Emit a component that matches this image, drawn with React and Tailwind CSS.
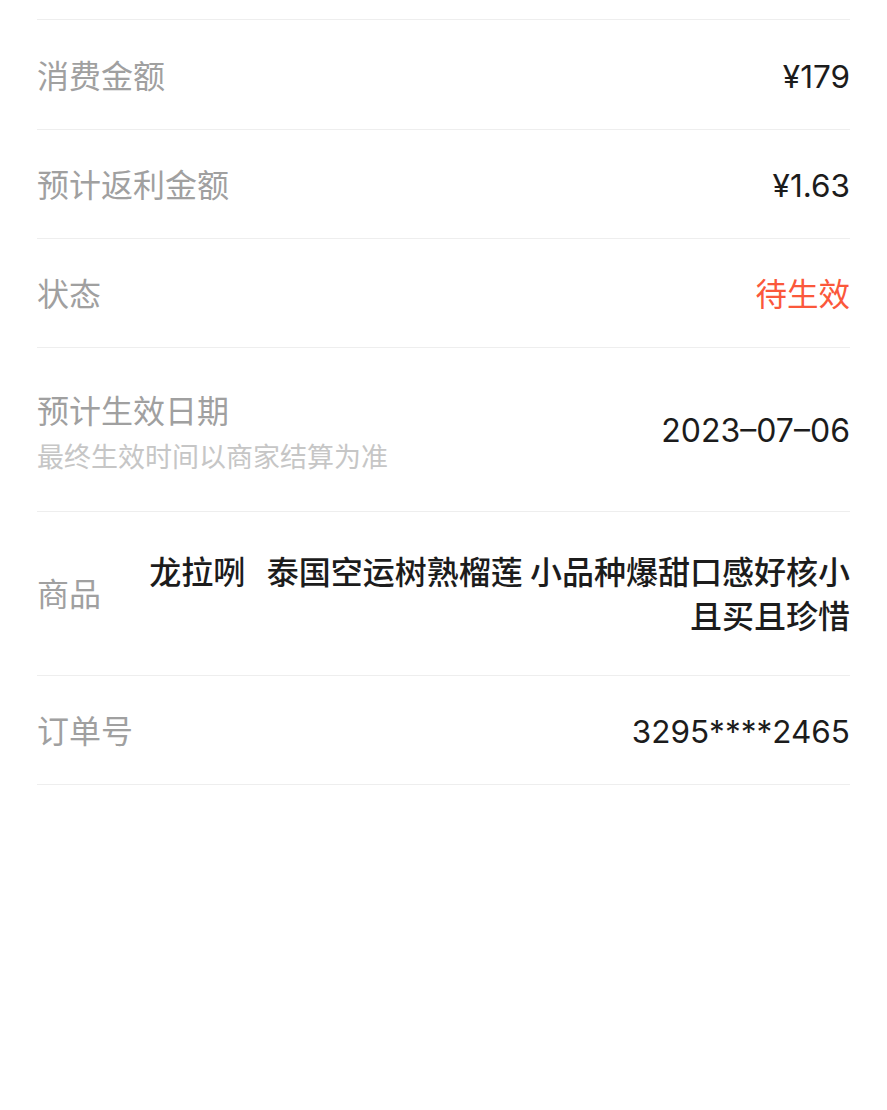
import React from "react";

const rows = [
  { label: "消费金额", value: "¥179", h: "h-[110px]" },
  { label: "预计返利金额", value: "¥1.63", h: "h-[109px]" },
  { label: "状态", value: "待生效", h: "h-[109px]", red: true },
];

function Row({ label, value, h, red }) {
  return (
    <div className={`flex items-center justify-between border-b border-[#eeeeee] pt-[4px] ${h}`}>
      <span className="text-[32px] leading-[44px] text-[#a0a0a0]">{label}</span>
      <span className={`text-[31.5px] leading-[44px] ${red ? "text-[#fb583b]" : "text-[#1c1c1c]"}`}>
        {value}
      </span>
    </div>
  );
}

export default function App() {
  return (
    <div
      className="min-h-[1110px] bg-white px-[37px]"
      style={{ fontFamily: 'Inter, "Noto Sans CJK SC", sans-serif' }}
    >
      <div className="h-[20px] border-b border-[#eeeeee]" />

      {rows.map((r) => (
        <Row key={r.label} {...r} />
      ))}

      {/* date */}
      <div className="flex h-[164px] items-center justify-between border-b border-[#eeeeee]">
        <div className="flex flex-col pt-[9px]">
          <span className="text-[32px] leading-[44px] text-[#a0a0a0]">预计生效日期</span>
          <span className="mt-[4px] text-[27px] leading-[40px] text-[#c6c6c6]">
            最终生效时间以商家结算为准
          </span>
        </div>
        <span className="pt-[2px] text-[32px] leading-[44px] text-[#1c1c1c]">2023–07–06</span>
      </div>

      {/* product */}
      <div className="flex h-[164px] items-center justify-between border-b border-[#eeeeee]">
        <span className="shrink-0 pt-[2px] text-[32px] leading-[44px] text-[#a0a0a0]">商品</span>
        <p
          className="ml-[36px] flex-1 pb-[4px] text-right text-[32px] font-medium leading-[44px] text-[#1c1c1c]"
          style={{ fontFamily: '"Noto Sans CJK SC", sans-serif' }}
        >
          龙拉咧&nbsp;&nbsp; 泰国空运树熟榴莲 小品种爆甜口感好核小且买且珍惜
        </p>
      </div>

      <Row label="订单号" value="3295****2465" h="h-[109px]" />
    </div>
  );
}
